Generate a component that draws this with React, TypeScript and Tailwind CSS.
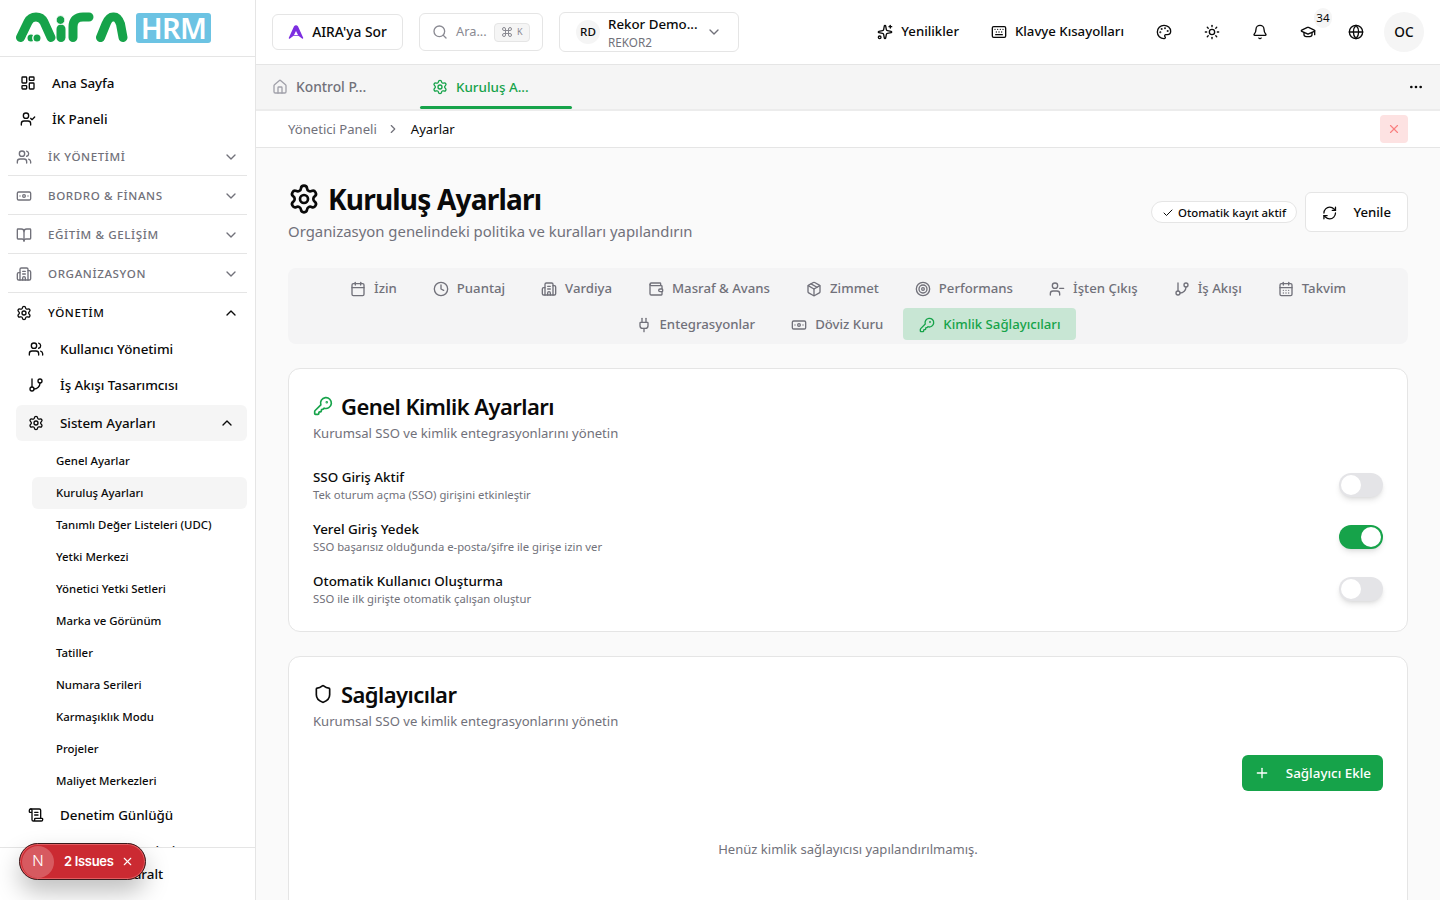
import {
  Banknote,
  Bell,
  BookOpen,
  Building2,
  Calendar,
  CalendarDays,
  Check,
  ChevronDown,
  ChevronLeft,
  ChevronRight,
  ChevronUp,
  Clock,
  Command,
  Ellipsis,
  GitBranch,
  Globe,
  GraduationCap,
  House,
  KeyRound,
  Keyboard,
  LayoutDashboard,
  Package,
  Palette,
  Plug,
  Plus,
  RefreshCw,
  ScrollText,
  Search,
  Settings,
  Shield,
  Sparkles,
  Sun,
  Target,
  UserCheck,
  UserMinus,
  Users,
  Wallet,
  X,
} from "lucide-react";

const groups = [
  { label: "İK YÖNETİMİ", icon: Users },
  { label: "BORDRO & FİNANS", icon: Banknote },
  { label: "EĞİTİM & GELİŞİM", icon: BookOpen },
  { label: "ORGANİZASYON", icon: Building2 },
];

const subItems = [
  "Genel Ayarlar",
  "Kuruluş Ayarları",
  "Tanımlı Değer Listeleri (UDC)",
  "Yetki Merkezi",
  "Yönetici Yetki Setleri",
  "Marka ve Görünüm",
  "Tatiller",
  "Numara Serileri",
  "Karmaşıklık Modu",
  "Projeler",
  "Maliyet Merkezleri",
];

const settingTabs = [
  { label: "İzin", icon: Calendar },
  { label: "Puantaj", icon: Clock },
  { label: "Vardiya", icon: Building2 },
  { label: "Masraf & Avans", icon: Wallet },
  { label: "Zimmet", icon: Package },
  { label: "Performans", icon: Target },
  { label: "İşten Çıkış", icon: UserMinus },
  { label: "İş Akışı", icon: GitBranch },
  { label: "Takvim", icon: CalendarDays },
  { label: "Entegrasyonlar", icon: Plug },
  { label: "Döviz Kuru", icon: Banknote },
  { label: "Kimlik Sağlayıcıları", icon: KeyRound, active: true },
];

const identityRows = [
  { title: "SSO Giriş Aktif", desc: "Tek oturum açma (SSO) girişini etkinleştir", on: false },
  { title: "Yerel Giriş Yedek", desc: "SSO başarısız olduğunda e-posta/şifre ile girişe izin ver", on: true },
  { title: "Otomatik Kullanıcı Oluşturma", desc: "SSO ile ilk girişte otomatik çalışan oluştur", on: false },
];

function AiraLogo() {
  return (
    <svg width="112" height="32" viewBox="0 0 112 32" fill="none" className="shrink-0">
      <g stroke="#16a34a" strokeWidth="9" strokeLinecap="round" strokeLinejoin="round">
        <path d="M4.5 25.5 L12 10 Q14.5 5 20 5 Q25.5 5 28 10 L35 25.5" />
        <path d="M45 17 V25.5" />
        <path d="M57 25.5 V15 Q57 5 67 5 H73" />
        <path d="M84.5 25.5 L90 12 Q93 5 97 5 H98 Q102 5 104.5 12 L107 25.5" />
      </g>
      <circle cx="44.5" cy="8" r="4.4" fill="#16a34a" stroke="#fff" strokeWidth="1" />
      <circle cx="15" cy="26" r="4.2" fill="#16a34a" stroke="#fff" strokeWidth="1.4" />
      <circle cx="21" cy="26" r="4.2" fill="#16a34a" stroke="#fff" strokeWidth="1.4" />
    </svg>
  );
}

function AiraMark() {
  return (
    <svg width="16" height="14" viewBox="0 0 16 14" fill="none">
      <path d="M1.5 13 L6.5 2 Q8 0 9.5 2 L14.5 13 L10.5 10 H5.5 Z" fill="#7c2ee0" stroke="#7c2ee0" strokeWidth="1.5" strokeLinejoin="round" />
      <path d="M8 6 L10 10 H6 Z" fill="#fff" />
    </svg>
  );
}

function Sidebar() {
  return (
    <aside className="flex h-full w-[256px] shrink-0 flex-col border-r border-[#e5e5e5] bg-white">
      <div className="flex h-[57px] shrink-0 items-center gap-2 border-b border-[#e5e5e5] pb-[1px] pl-4">
        <AiraLogo />
        <div className="flex h-[30px] w-[75px] items-center justify-center rounded-[3px] bg-[#6cc3e3] text-[29px] leading-none font-semibold tracking-tight text-white">
          HRM
        </div>
      </div>

      <nav className="min-h-0 flex-1 overflow-hidden px-2 pt-2 text-[13.4px] font-medium tracking-[-0.04px] text-[#0a0a0a]">
        <div className="flex h-9 items-center gap-4 px-3">
          <LayoutDashboard size={16} />
          <span>Ana Sayfa</span>
        </div>
        <div className="flex h-9 items-center gap-4 px-3">
          <UserCheck size={16} />
          <span>İK Paneli</span>
        </div>

        {groups.map((g) => (
          <div
            key={g.label}
            className="flex h-[39px] items-center gap-4 border-b border-[#e5e5e5] px-2 pt-[1px] text-[11.6px] tracking-[0.6px] text-[#71717a]"
          >
            <g.icon size={16} />
            <span className="flex-1">{g.label}</span>
            <ChevronDown size={16} />
          </div>
        ))}

        <div className="flex h-[39px] items-center gap-4 px-2 pt-[1px] text-[11.6px] tracking-[0.6px]">
          <Settings size={16} />
          <span className="flex-1">YÖNETİM</span>
          <ChevronUp size={16} />
        </div>

        <div className="pl-2">
          <div className="-mt-[1px] flex h-9 items-center gap-4 px-3">
            <Users size={16} />
            <span>Kullanıcı Yönetimi</span>
          </div>
          <div className="flex h-9 items-center gap-4 px-3">
            <GitBranch size={16} />
            <span>İş Akışı Tasarımcısı</span>
          </div>
          <div className="mt-[2px] flex h-9 items-center gap-4 rounded-md bg-[#f5f5f5] px-3">
            <Settings size={16} />
            <span className="flex-1">Sistem Ayarları</span>
            <ChevronUp size={16} />
          </div>
          <div className="mt-1 pl-4 text-[11.4px] tracking-normal">
            {subItems.map((s) => (
              <div
                key={s}
                className={
                  s === "Kuruluş Ayarları"
                    ? "flex h-8 items-center rounded-md bg-[#f5f5f5] px-6"
                    : "flex h-8 items-center px-6"
                }
              >
                {s}
              </div>
            ))}
          </div>
          <div className="flex h-9 items-center gap-4 px-3">
            <ScrollText size={16} />
            <span>Denetim Günlüğü</span>
          </div>
          <div className="flex h-9 items-center gap-4 px-3">
            <Settings size={16} />
            <span>Abonelik Yönetimi</span>
          </div>
        </div>
      </nav>

      <div className="flex h-[53px] shrink-0 items-center justify-center gap-4 border-t border-[#e5e5e5] text-[13.4px] font-medium text-[#0a0a0a]">
        <ChevronLeft size={16} />
        <span>Daralt</span>
      </div>
    </aside>
  );
}

function Topbar() {
  return (
    <header className="flex h-[65px] shrink-0 items-center border-b border-[#e5e5e5] bg-white pr-4 pl-4">
      <div className="flex h-9 w-[131px] items-center justify-center gap-2 rounded-md border border-[#e5e5e5] text-[13.8px] font-medium text-[#0a0a0a]">
        <AiraMark />
        <span>AIRA'ya Sor</span>
      </div>
      <div className="ml-4 flex h-[38px] w-[124px] items-center rounded-md border border-[#e5e5e5] pl-[12px] text-[12.8px] text-[#8a8a92]">
        <Search size={16} />
        <span className="ml-2">Ara...</span>
        <span className="ml-[7px] flex h-[19px] w-[36px] items-center justify-center gap-1 rounded border border-[#e5e5e5] bg-[#f5f5f5] text-[9px] text-[#8a8a92]">
          <Command size={12} />K
        </span>
      </div>
      <div className="ml-4 flex h-10 w-[180px] items-center rounded-md border border-[#e5e5e5] pl-4">
        <div className="flex size-6 items-center justify-center rounded-full bg-[#f5f5f5] text-[11.6px] font-medium text-[#0a0a0a]">
          RD
        </div>
        <div className="mt-[2px] ml-[8px] flex w-[91px] flex-col">
          <span className="text-[13.3px] leading-[18px] font-medium whitespace-nowrap text-[#0a0a0a]">Rekor Demo...</span>
          <span className="text-[11.7px] leading-[18px] text-[#71717a]">REKOR2</span>
        </div>
        <ChevronDown size={16} className="ml-[7px] text-[#71717a]" />
      </div>

      <div className="ml-auto flex items-center text-[13.2px] font-medium text-[#0a0a0a]">
        <div className="flex items-center gap-2">
          <Sparkles size={16} />
          <span>Yenilikler</span>
        </div>
        <div className="ml-8 flex items-center gap-2">
          <Keyboard size={16} />
          <span>Klavye Kısayolları</span>
        </div>
        <div className="ml-[20px] flex items-center gap-2">
          <div className="flex size-10 items-center justify-center">
            <Palette size={16} />
          </div>
          <div className="flex size-10 items-center justify-center">
            <Sun size={16} />
          </div>
          <div className="flex size-10 items-center justify-center">
            <Bell size={16} />
          </div>
          <div className="relative flex size-10 items-center justify-center">
            <GraduationCap size={16} />
            <span className="absolute top-[-4px] right-[-4px] flex h-5 w-[18px] items-center justify-center rounded-full bg-[#f5f5f5] text-[11.6px] font-normal">
              34
            </span>
          </div>
          <div className="flex size-10 items-center justify-center">
            <Globe size={16} />
          </div>
          <div className="flex size-10 items-center justify-center rounded-full bg-[#f5f5f5] text-[13.6px] font-medium">
            OC
          </div>
        </div>
      </div>
    </header>
  );
}

function TabBar() {
  return (
    <div className="flex h-[46px] shrink-0 items-center border-b-2 border-[#ececec] bg-[#f5f5f5] pl-1 font-medium">
      <div className="flex h-full w-[152px] items-center gap-2 px-3 text-[13.8px] text-[#71717a]">
        <House size={16} className="text-[#a1a1aa]" />
        <span>Kontrol P...</span>
      </div>
      <div className="relative ml-2 flex h-full w-[152px] items-center gap-2 px-3 text-[13.4px] text-[#16a34a]">
        <Settings size={16} />
        <span>Kuruluş A...</span>
        <div className="absolute right-0 bottom-0 left-0 h-[3px] rounded-full bg-[#16a34a]" />
      </div>
      <Ellipsis size={16} className="mr-4 ml-auto text-[#0a0a0a]" />
    </div>
  );
}

function Breadcrumb() {
  return (
    <div className="flex h-[37px] shrink-0 items-center border-b border-[#e5e5e5] bg-white pr-8 pl-8 text-[13.1px]">
      <span className="pt-[2px] text-[#71717a]">Yönetici Paneli</span>
      <ChevronRight size={14} className="mx-[9px] text-[#71717a]" />
      <span className="pt-[2px] pl-[2px] text-[#0a0a0a]">Ayarlar</span>
      <div className="ml-auto flex size-7 items-center justify-center rounded bg-[#fde2e2] text-[#f98080]">
        <X size={14} />
      </div>
    </div>
  );
}

function Toggle({ on }: { on: boolean }) {
  return (
    <div
      className={
        on
          ? "flex h-6 w-11 items-center justify-end rounded-full bg-[#16a34a] p-[2px] shadow-md"
          : "flex h-6 w-11 items-center rounded-full bg-[#e4e4e7] p-[2px] shadow-md"
      }
    >
      <div className="size-5 rounded-full bg-white" />
    </div>
  );
}

function Content() {
  return (
    <main className="min-h-0 flex-1 overflow-hidden bg-[#fafafa] px-8 pt-[31px]">
      <div className="flex items-start justify-between">
        <div>
          <div className="flex h-[40px] items-center gap-2">
            <Settings size={32} strokeWidth={2} className="text-[#0a0a0a]" />
            <h1 className="text-[28px] font-bold tracking-[-0.8px] text-[#0a0a0a]">Kuruluş Ayarları</h1>
          </div>
          <p className="mt-[1px] text-[14.9px] leading-[23px] text-[#71717a]">
            Organizasyon genelindeki politika ve kuralları yapılandırın
          </p>
        </div>
        <div className="mt-[13px] flex items-center gap-2">
          <div className="flex h-[22px] items-center gap-1 rounded-full border border-[#e5e5e5] bg-white px-[10px] pt-[1px] text-[11.4px] font-medium text-[#0a0a0a]">
            <Check size={12} />
            <span>Otomatik kayıt aktif</span>
          </div>
          <div className="flex h-10 w-[103px] items-center gap-4 rounded-md border border-[#e5e5e5] bg-white px-4 pt-[1px] text-[13.2px] font-medium text-[#0a0a0a]">
            <RefreshCw size={16} />
            <span>Yenile</span>
          </div>
        </div>
      </div>

      <div className="mt-[25px] flex flex-wrap justify-center gap-1 rounded-lg bg-[#f4f4f5] p-1 text-[13.2px] font-medium">
        {settingTabs.map((t) => (
          <div
            key={t.label}
            className={
              t.active
                ? "flex h-8 items-center gap-2 rounded bg-[#c8e6d4] px-4 pt-[1px] text-[#16a34a]"
                : "flex h-8 items-center gap-2 px-4 pt-[1px] text-[#71717a]"
            }
          >
            <t.icon size={16} />
            <span>{t.label}</span>
          </div>
        ))}
      </div>

      <section className="mt-6 rounded-xl border border-[#e5e5e5] bg-white p-6">
        <div className="flex items-center gap-2">
          <KeyRound size={20} className="text-[#16a34a]" />
          <h2 className="text-[22px] leading-[26px] font-semibold tracking-tight text-[#0a0a0a]">Genel Kimlik Ayarları</h2>
        </div>
        <p className="mt-1 text-[13.1px] leading-5 text-[#71717a]">Kurumsal SSO ve kimlik entegrasyonlarını yönetin</p>
        <div className="mt-6 flex flex-col gap-4">
          {identityRows.map((r) => (
            <div key={r.title} className="flex items-center justify-between">
              <div>
                <div className="text-[13.4px] leading-5 font-medium text-[#0a0a0a]">{r.title}</div>
                <div className="text-[11.3px] leading-4 text-[#71717a]">{r.desc}</div>
              </div>
              <Toggle on={r.on} />
            </div>
          ))}
        </div>
      </section>

      <section className="mt-6 rounded-xl border border-[#e5e5e5] bg-white p-6 pb-20">
        <div className="flex items-center gap-2">
          <Shield size={20} className="text-[#0a0a0a]" />
          <h2 className="text-[22px] leading-[26px] font-semibold tracking-tight text-[#0a0a0a]">Sağlayıcılar</h2>
        </div>
        <p className="mt-1 text-[13.1px] leading-5 text-[#71717a]">Kurumsal SSO ve kimlik entegrasyonlarını yönetin</p>
        <div className="mt-6 flex justify-end">
          <div className="flex h-9 items-center gap-4 rounded-md bg-[#16a34a] px-3 text-[13.4px] font-medium text-white">
            <Plus size={16} />
            <span>Sağlayıcı Ekle</span>
          </div>
        </div>
        <p className="mt-12 text-center text-[13.05px] leading-5 text-[#71717a]">Henüz kimlik sağlayıcısı yapılandırılmamış.</p>
      </section>
    </main>
  );
}

function IssuesBadge() {
  return (
    <div className="absolute top-[843px] left-[19px] flex h-[37px] w-[127px] items-center rounded-full border border-[#3a1a1c] bg-[#cb2a32] pl-[2px] font-['Inter',sans-serif] shadow-[0_12px_24px_rgba(0,0,0,0.25)] ring-1 ring-[#e25c60] ring-inset">
      <div className="flex size-8 items-center justify-center rounded-full bg-[#d75a60] text-[15px] font-light text-white">N</div>
      <span className="ml-[10px] text-[13px] font-semibold tracking-tight whitespace-nowrap text-white">2 Issues</span>
      <X size={13} className="ml-2 text-white" />
    </div>
  );
}

export default function App() {
  return (
    <div className="relative flex h-screen w-full overflow-hidden bg-white font-['Noto_Sans',sans-serif]">
      <Sidebar />
      <div className="flex min-w-0 flex-1 flex-col">
        <Topbar />
        <TabBar />
        <Breadcrumb />
        <Content />
      </div>
      <IssuesBadge />
    </div>
  );
}
